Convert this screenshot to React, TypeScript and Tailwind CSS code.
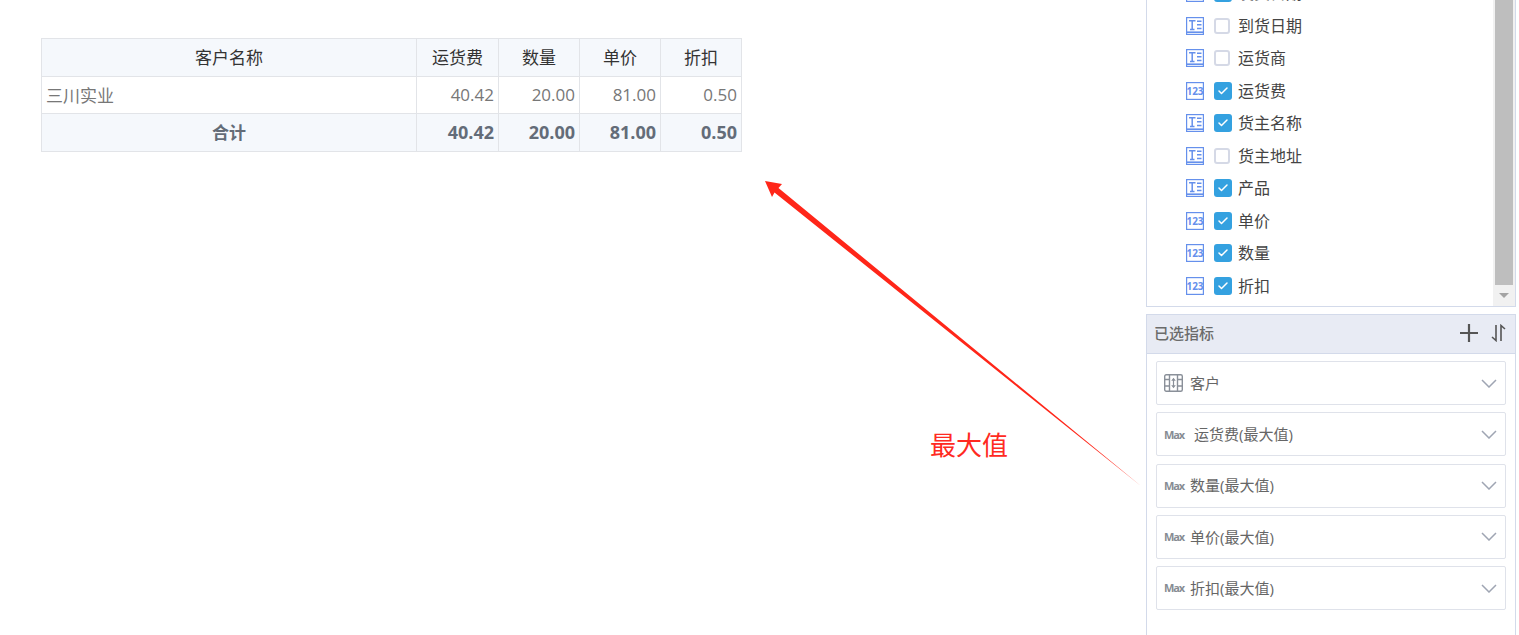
import { Check } from "lucide-react";

type Field = { name: string; kind: "text" | "num"; checked: boolean };

const fields: Field[] = [
  { name: "发货日期", kind: "text", checked: true },
  { name: "到货日期", kind: "text", checked: false },
  { name: "运货商", kind: "text", checked: false },
  { name: "运货费", kind: "num", checked: true },
  { name: "货主名称", kind: "text", checked: true },
  { name: "货主地址", kind: "text", checked: false },
  { name: "产品", kind: "text", checked: true },
  { name: "单价", kind: "num", checked: true },
  { name: "数量", kind: "num", checked: true },
  { name: "折扣", kind: "num", checked: true },
];

const measures = [
  { label: "运货费(最大值)", wide: true },
  { label: "数量(最大值)", wide: false },
  { label: "单价(最大值)", wide: false },
  { label: "折扣(最大值)", wide: false },
];

const headers = ["运货费", "数量", "单价", "折扣"];
const values = ["40.42", "20.00", "81.00", "0.50"];

function TextIcon() {
  return (
    <svg width="18" height="18" viewBox="0 0 18 18" fill="none" stroke="#6590ec">
      <rect x="0.6" y="0.6" width="16.8" height="16.8" strokeWidth="1.2" />
      <path d="M0 15.2h18" strokeWidth="1.6" />
      <path d="M3 3.7h6.5M6.2 3.7v8.6M4 12.6h4.5" strokeWidth="1.5" />
      <path d="M11 4.2h4.5M11 7.8h4.5M11 11.5h4.5" strokeWidth="1.4" />
    </svg>
  );
}

function NumIcon() {
  return (
    <svg width="18" height="18" viewBox="0 0 18 18" fill="none" stroke="#6590ec">
      <rect x="0.6" y="0.6" width="16.8" height="16.8" strokeWidth="1.2" />
      <text x="9" y="13" textAnchor="middle" fontSize="10" fontWeight="700" fill="#6590ec" stroke="none">
        123
      </text>
    </svg>
  );
}

function DimensionIcon() {
  return (
    <svg width="19" height="18" viewBox="0 0 19 18" fill="none" stroke="#8a9099" strokeWidth="1.4">
      <rect x="0.7" y="0.7" width="17.6" height="16.6" rx="1.5" />
      <path d="M5.5 0.7v16.6M13.5 0.7v16.6M0.7 5.5h4.8M0.7 12h4.8M13.5 5.5h4.8M13.5 12h4.8" />
      <path d="M9.5 5v8" strokeWidth="1.2" />
      <path d="M7.2 6.8l2.3-3 2.3 3zM7.2 11.2l2.3 3 2.3-3z" fill="#8a9099" stroke="none" />
    </svg>
  );
}

function PlusIcon() {
  return (
    <svg width="18" height="18" viewBox="0 0 18 18" fill="none" stroke="#555" strokeWidth="2.2">
      <path d="M0 9h18M9 0v18" />
    </svg>
  );
}

function SortIcon() {
  return (
    <svg width="15" height="18" viewBox="0 0 15 18" fill="none" stroke="#555" strokeWidth="1.6">
      <path d="M5 1v15.5L1 13" />
      <path d="M10 17V1.5L14 5" />
    </svg>
  );
}

function Chevron() {
  return (
    <svg width="16" height="9" viewBox="0 0 16 9" fill="none" stroke="#9fa5b3" strokeWidth="1.5" className="ml-auto">
      <path d="M1 1l7 7 7-7" />
    </svg>
  );
}

function FieldRow({ field }: { field: Field }) {
  return (
    <div className="flex h-[32.5px] items-center pl-[39px]">
      {field.kind === "text" ? <TextIcon /> : <NumIcon />}
      <div className="ml-[10px] w-[18px]">
        {field.checked ? (
          <div className="flex h-[18px] w-[18px] items-center justify-center rounded-[3px] bg-[#34a1e0]">
            <Check size={12} strokeWidth={3} className="text-white" />
          </div>
        ) : (
          <div className="h-[16px] w-[16px] rounded-[3px] border-2 border-[#d5d9e6] bg-white" />
        )}
      </div>
      <span className="ml-[6px] text-[16px] text-[#444]">{field.name}</span>
    </div>
  );
}

function MeasureRow({ label, wide }: { label: string; wide: boolean }) {
  return (
    <div className="flex h-[44px] items-center rounded-[2px] border border-[#dfe2ea] bg-white pl-[7px] pr-[8px]">
      <span className="w-[20px] pt-[1px] text-[11px] font-bold tracking-[-1.1px] text-[#878c93]">Max</span>
      <span className={wide ? "ml-[10px] text-[15px] text-[#666]" : "ml-[6px] text-[15px] text-[#666]"}>{label}</span>
      <Chevron />
    </div>
  );
}

function DataTable() {
  return (
    <table className="w-[700px] table-fixed border-collapse text-[17px]">
      <colgroup>
        <col className="w-[375px]" />
        <col className="w-[82px]" />
        <col className="w-[81px]" />
        <col className="w-[81px]" />
        <col className="w-[81px]" />
      </colgroup>
      <tbody>
        <tr className="h-[38px] bg-[#f5f8fc] text-[#333]">
          <td className="border border-[#e2e4e8] text-center">客户名称</td>
          {headers.map((h) => (
            <td key={h} className="border border-[#e2e4e8] text-center">
              {h}
            </td>
          ))}
        </tr>
        <tr className="h-[37px] text-[#777]">
          <td className="border border-[#e2e4e8] pl-[4px] pt-[2px]">三川实业</td>
          {values.map((v, i) => (
            <td key={i} className="border border-[#e2e4e8] pr-[4px] text-right">
              {v}
            </td>
          ))}
        </tr>
        <tr className="h-[38px] bg-[#f5f8fc] font-bold text-[#636c78]">
          <td className="border border-[#e2e4e8] text-center">合计</td>
          {values.map((v, i) => (
            <td key={i} className="border border-[#e2e4e8] pr-[4px] text-right text-[18px]">
              {v}
            </td>
          ))}
        </tr>
      </tbody>
    </table>
  );
}

export default function App() {
  return (
    <div className="relative flex h-[635px] w-full justify-between overflow-hidden bg-white font-['Open_Sans','Noto_Sans_CJK_SC',sans-serif]">
      <div className="pl-[41px] pt-[38px]">
        <DataTable />
      </div>

      <div className="mr-[3px] mt-[-23px] flex w-[370px] shrink-0 flex-col">
        {/* field list */}
        <div className="flex h-[330px] border-b border-l border-r border-[#d3daea]">
          <div className="flex-1">
            {fields.map((f) => (
              <FieldRow key={f.name} field={f} />
            ))}
          </div>
          <div className="flex w-[22px] flex-col bg-[#f1f1f1] px-[2px]">
            <div className="h-[308px] bg-[#bebebe]" />
            <div className="flex flex-1 items-center justify-center">
              <div className="h-0 w-0 border-x-[5px] border-t-[5px] border-x-transparent border-t-[#a3a3a3]" />
            </div>
          </div>
        </div>

        {/* selected measures */}
        <div className="mt-[7px] flex flex-1 flex-col border-x border-t border-[#d3daea]">
          <div className="flex h-[39px] items-center border-b border-[#d3daea] bg-[#e8ebf4] pb-[2px] pl-[7px] pr-[9px]">
            <span className="text-[15px] font-medium text-[#6b6b6b]">已选指标</span>
            <span className="ml-auto">
              <PlusIcon />
            </span>
            <span className="ml-[13px]">
              <SortIcon />
            </span>
          </div>
          <div className="flex flex-col gap-[7.25px] px-[9px] pt-[7px]">
            <div className="flex h-[44px] items-center rounded-[2px] border border-[#dfe2ea] bg-white pl-[7px] pr-[8px]">
              <DimensionIcon />
              <span className="ml-[7px] text-[15px] text-[#666]">客户</span>
              <Chevron />
            </div>
            {measures.map((m) => (
              <MeasureRow key={m.label} label={m.label} wide={m.wide} />
            ))}
          </div>
        </div>
      </div>

      {/* red annotation over the page */}
      <svg className="pointer-events-none absolute left-0 top-0" width="1519" height="635" fill="none">
        <polygon points="765,181 782,184 778.5,188 1141,486 774.5,192.5 772,197" fill="#ff2619" />
      </svg>
      <span className="absolute left-[930px] top-[426px] text-[26px] leading-[38px] text-[#ff2a22]">最大值</span>
    </div>
  );
}
